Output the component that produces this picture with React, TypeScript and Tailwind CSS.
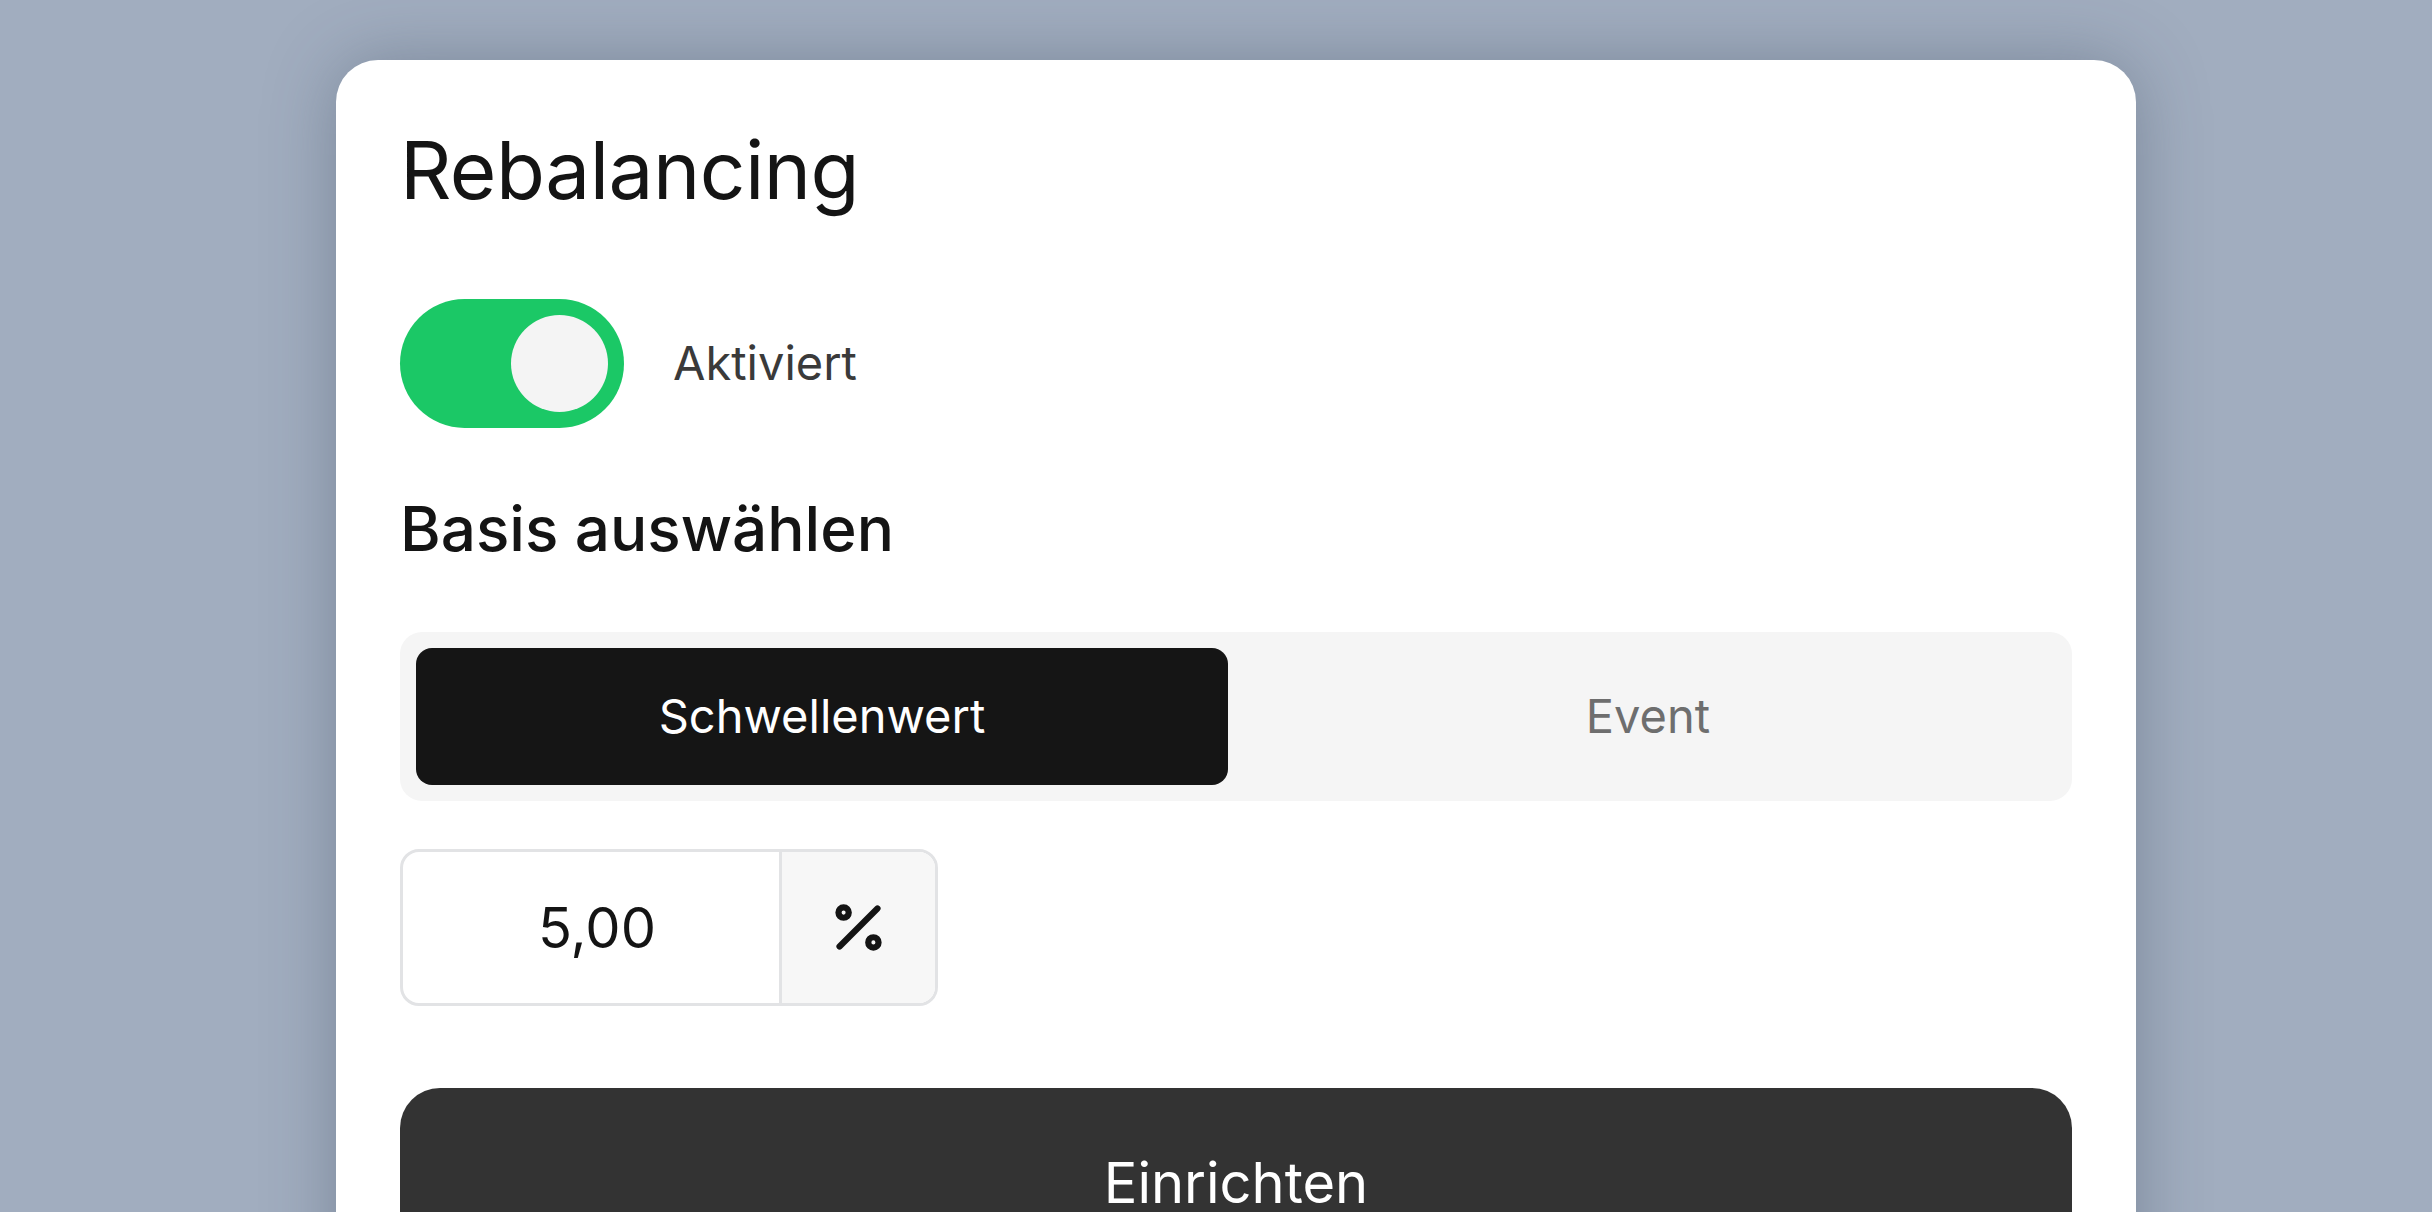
import React from 'react';

const font = { fontFamily: 'Inter, "Noto Sans", sans-serif' };

const Toggle: React.FC<{ on: boolean }> = ({ on }) => (
  <div
    className={`flex items-center w-[224px] h-[129px] rounded-full px-[16px] ${
      on ? 'bg-[#1bc866] justify-end' : 'bg-[#d4d4d4] justify-start'
    }`}
  >
    <div className="w-[97px] h-[97px] rounded-full bg-[#f4f4f4]" />
  </div>
);

const PercentIcon = () => (
  <svg width="65" height="65" viewBox="0 0 24 24" fill="none" stroke="#141414" strokeWidth="2.3" strokeLinecap="round">
    <line x1="19" y1="5" x2="5" y2="19" />
    <circle cx="6.5" cy="6.5" r="1.9" />
    <circle cx="17.5" cy="17.5" r="1.9" />
  </svg>
);

const App: React.FC = () => {
  return (
    <div className="w-full h-[1212px] overflow-hidden bg-[#a1adbf]" style={font}>
      <div className="ml-[336px] mt-[60px] w-[1800px] h-[1300px] bg-white rounded-[42px] shadow-[0_0_70px_rgba(51,65,85,0.35)] px-[64px] pt-[70px]">
        <h1 className="text-[80px] leading-[80px] font-normal text-[#141414] tracking-[-0.5px]">Rebalancing</h1>

        <div className="flex items-center gap-[49px] mt-[89px]">
          <Toggle on />
          <span className="text-[47px] text-[#3a3a3a]">Aktiviert</span>
        </div>

        <h2 className="mt-[63px] text-[62px] font-medium text-[#141414] leading-[76px]">Basis auswählen</h2>

        <div className="mt-[65px] flex h-[169px] p-[16px] rounded-[22px] bg-[#f5f5f5]">
          <button className="w-[812px] h-full rounded-[16px] bg-[#151515] text-white text-[47px]">
            Schwellenwert
          </button>
          <button className="flex-1 h-full rounded-[16px] pl-[12px] text-[#6e6e6e] text-[47px]">Event</button>
        </div>

        <div className="mt-[48px] flex w-[538px] h-[157px] border-[3px] border-[#e2e3e5] rounded-[19px] overflow-hidden">
          <div className="flex-1 flex items-center justify-center pl-[12px] text-[56px] text-[#141414]">5,00</div>
          <div className="w-[156px] flex items-center justify-center bg-[#f7f7f7] border-l-[3px] border-[#e2e3e5]">
            <PercentIcon />
          </div>
        </div>

        <button className="mt-[82px] w-full h-[190px] rounded-[40px] bg-[#333333] text-white text-[56px]">
          Einrichten
        </button>
      </div>
    </div>
  );
};

export default App;
